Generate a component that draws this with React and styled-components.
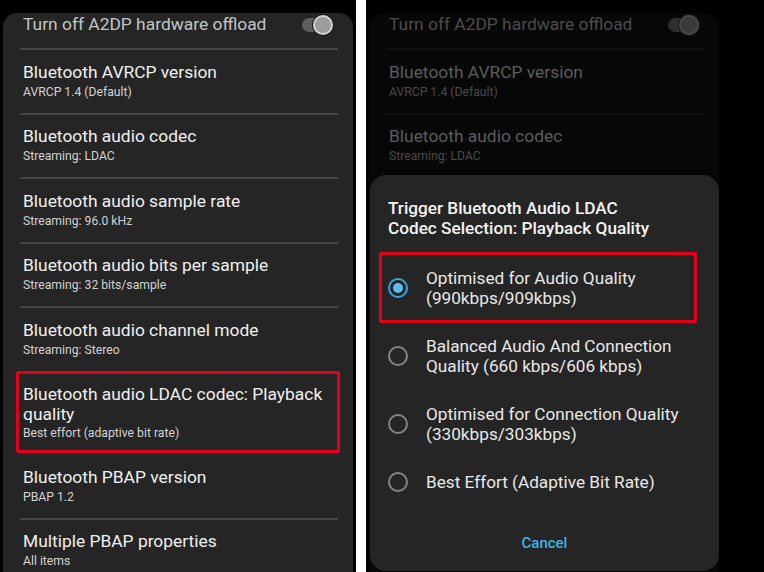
import React from "react";
import styled, { createGlobalStyle, css } from "styled-components";

const GlobalStyle = createGlobalStyle`
  html, body { margin: 0; padding: 0; background: #ffffff; }
  body { font-family: Roboto, "Noto Sans", "Liberation Sans", sans-serif; }
  * { box-sizing: border-box; }
`;

const Page = styled.div`
  display: flex;
  width: 764px;
  height: 572px;
  overflow: hidden;
  background: #ffffff;
`;

const Pane = styled.div`
  background: #000;
  height: 100%;
  position: relative;
  flex: ${(p) => (p.$grow ? "1" : "0 0 356px")};
`;

const Gap = styled.div`
  flex: 0 0 10px;
  background: #ffffff;
`;

const Screen = styled.div`
  width: 356px;
  height: 100%;
  padding: 13px 3px 0 3px;
  position: relative;
`;

const Card = styled.div`
  height: 100%;
  background: ${(p) => (p.$dim ? "#070707" : "#252525")};
  border-radius: 14px 14px 0 0;
  padding: 0 15px 0 17px;
`;

const Row = styled.div`
  display: flex;
  align-items: center;
  justify-content: space-between;
  padding: ${(p) => p.$pad || "11.5px 0 11px 3px"};
  border-top: ${(p) =>
    p.$divider ? `2px solid ${p.$dim ? "#101010" : "#474747"}` : "none"};
`;

const TextBlock = styled.div`
  display: flex;
  flex-direction: column;
`;

const Title = styled.div`
  font-size: 17.4px;
  line-height: 21px;
  color: ${(p) =>
    p.$dim
      ? p.$muted
        ? "#4c4c4c"
        : "#5c5c5c"
      : p.$muted
      ? "#c4c4c4"
      : "#f0f0f0"};
`;

const Subtitle = styled.div`
  font-size: 12.2px;
  line-height: 19px;
  color: ${(p) => (p.$dim ? "#4a4a4a" : "#d2d2d2")};
`;

const Highlight = styled.div`
  margin: 0 -2px 0 -4px;
  padding: 10px 0 7.5px 4px;
  border: 3px solid #e2001b;
  border-radius: 2px;
  ${Title} {
    line-height: 20px;
  }
`;

const Track = styled.div`
  position: relative;
  width: 31px;
  height: 20px;
  margin-right: 5px;
  &::before {
    content: "";
    position: absolute;
    left: 0;
    top: 3px;
    width: 26px;
    height: 14px;
    border-radius: 7px;
    background: ${(p) => (p.$dim ? "#2e2e2e" : "#5e5e5e")};
  }
`;

const Thumb = styled.div`
  position: absolute;
  right: 0;
  top: 0;
  width: 20px;
  height: 20px;
  border-radius: 50%;
  background: ${(p) => (p.$dim ? "#3a3a3a" : "#9c9c9c")};
  border: 2px solid ${(p) => (p.$dim ? "#4a4a4a" : "#d4d4d4")};
  box-shadow: 0 0 0 1px #1a1a1a;
`;

const Toggle = ({ dim }) => (
  <Track $dim={dim}>
    <Thumb $dim={dim} />
  </Track>
);

const items = [
  ["Bluetooth AVRCP version", "AVRCP 1.4 (Default)"],
  ["Bluetooth audio codec", "Streaming: LDAC"],
  ["Bluetooth audio sample rate", "Streaming: 96.0 kHz"],
  ["Bluetooth audio bits per sample", "Streaming: 32 bits/sample"],
  ["Bluetooth audio channel mode", "Streaming: Stereo"],
];

const FullList = () => (
  <Card>
    <Row $pad="1px 0 13px 3px">
      <Title $muted>Turn off A2DP hardware offload</Title>
      <Toggle />
    </Row>
    {items.map(([t, s]) => (
      <Row key={t} $divider>
        <TextBlock>
          <Title>{t}</Title>
          <Subtitle>{s}</Subtitle>
        </TextBlock>
      </Row>
    ))}
    <Highlight>
      <Title>
        Bluetooth audio LDAC codec: Playback
        <br />
        quality
      </Title>
      <Subtitle>Best effort (adaptive bit rate)</Subtitle>
    </Highlight>
    <Row $pad="14px 0 10.5px 3px">
      <TextBlock>
        <Title>Bluetooth PBAP version</Title>
        <Subtitle>PBAP 1.2</Subtitle>
      </TextBlock>
    </Row>
    <Row $divider $pad="11px 0 11px 3px">
      <TextBlock>
        <Title>Multiple PBAP properties</Title>
        <Subtitle>All items</Subtitle>
      </TextBlock>
    </Row>
  </Card>
);

const DimList = () => (
  <Card $dim>
    <Row $pad="1px 0 13px 3px">
      <Title $dim $muted>Turn off A2DP hardware offload</Title>
      <Toggle dim />
    </Row>
    {items.slice(0, 2).map(([t, s]) => (
      <Row key={t} $divider $dim>
        <TextBlock>
          <Title $dim>{t}</Title>
          <Subtitle $dim>{s}</Subtitle>
        </TextBlock>
      </Row>
    ))}
  </Card>
);

const Dialog = styled.div`
  position: absolute;
  left: 4px;
  top: 175px;
  width: 349px;
  bottom: 1px;
  background: #252525;
  border-radius: 16px;
  padding-top: 23px;
  display: flex;
  flex-direction: column;
`;

const DialogTitle = styled.div`
  padding: 0 16px 0 18px;
  font-size: 17.2px;
  line-height: 20px;
  font-weight: 500;
  color: #f4f4f4;
`;

const OptionList = styled.div`
  margin-top: 15.5px;
  padding: 0 22px 0 9px;
  display: flex;
  flex-direction: column;
`;

const Option = styled.div`
  display: flex;
  align-items: center;
  gap: 18px;
  ${(p) =>
    p.$boxed
      ? css`
          margin: -1.5px 0;
          padding: 12.5px 0 12.5px 6px;
          border: 3px solid #e2001b;
          border-radius: 2px;
        `
      : css`
          padding: 14px 0 14px 9px;
        `}
`;

const Radio = styled.div`
  flex: 0 0 20px;
  width: 20px;
  height: 20px;
  border-radius: 50%;
  border: 2px solid ${(p) => (p.$on ? "#3fa2dc" : "#858585")};
  display: flex;
  align-items: center;
  justify-content: center;
  &::after {
    content: "";
    width: 10px;
    height: 10px;
    border-radius: 50%;
    background: ${(p) => (p.$on ? "#5dbcf0" : "transparent")};
  }
`;

const OptionText = styled.div`
  font-size: 17.2px;
  line-height: 20px;
  color: #e8e8e8;
  white-space: nowrap;
`;

const Cancel = styled.div`
  margin-top: 27px;
  text-align: center;
  font-size: 15px;
  line-height: 20px;
  font-weight: 500;
  color: #3fb2e6;
`;

const options = [
  ["Optimised for Audio Quality", "(990kbps/909kbps)"],
  ["Balanced Audio And Connection", "Quality (660 kbps/606 kbps)"],
  ["Optimised for Connection Quality", "(330kbps/303kbps)"],
  ["Best Effort (Adaptive Bit Rate)"],
];

export default function App() {
  return (
    <>
      <GlobalStyle />
      <Page>
        <Pane>
          <Screen>
            <FullList />
          </Screen>
        </Pane>
        <Gap />
        <Pane $grow>
          <Screen>
            <DimList />
            <Dialog>
              <DialogTitle>
                Trigger Bluetooth Audio LDAC
                <br />
                Codec Selection: Playback Quality
              </DialogTitle>
              <OptionList>
                {options.map((lines, i) => (
                  <Option key={i} $boxed={i === 0}>
                    <Radio $on={i === 0} />
                    <OptionText>
                      {lines.map((l, j) => (
                        <div key={j}>{l}</div>
                      ))}
                    </OptionText>
                  </Option>
                ))}
              </OptionList>
              <Cancel>Cancel</Cancel>
            </Dialog>
          </Screen>
        </Pane>
      </Page>
    </>
  );
}
